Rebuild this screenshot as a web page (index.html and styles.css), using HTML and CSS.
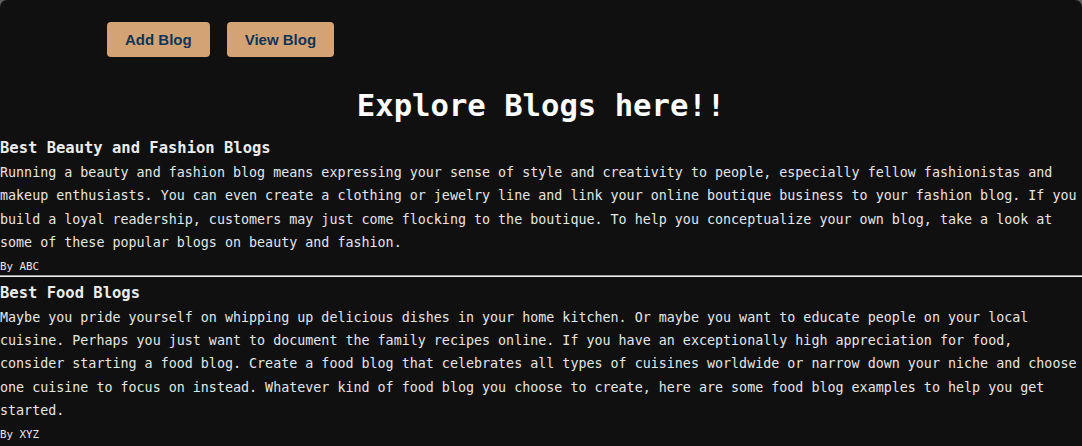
FILE: index.html
```html
<!DOCTYPE html>
<html lang="en">
<head>
<meta charset="utf-8">
<title>Blogs</title>
<link rel="stylesheet" href="styles.css">
</head>
<body>
<div class="page">
  <nav class="nav">
    <button class="btn">Add Blog</button>
    <button class="btn">View Blog</button>
  </nav>
  <h1 class="title">Explore Blogs here!!</h1>
  <article class="post">
    <h3 class="post-title">Best Beauty and Fashion Blogs</h3>
    <p class="post-body">Running a beauty and fashion blog means expressing your sense of style and creativity to people, especially fellow fashionistas and makeup enthusiasts. You can even create a clothing or jewelry line and link your online boutique business to your fashion blog. If you build a loyal readership, customers may just come flocking to the boutique. To help you conceptualize your own blog, take a look at some of these popular blogs on beauty and fashion.</p>
    <div class="post-author">By ABC</div>
  </article>
  <hr class="divider">
  <article class="post">
    <h3 class="post-title">Best Food Blogs</h3>
    <p class="post-body">Maybe you pride yourself on whipping up delicious dishes in your home kitchen. Or maybe you want to educate people on your local cuisine. Perhaps you just want to document the family recipes online. If you have an exceptionally high appreciation for food, consider starting a food blog. Create a food blog that celebrates all types of cuisines worldwide or narrow down your niche and choose one cuisine to focus on instead. Whatever kind of food blog you choose to create, here are some food blog examples to help you get started.</p>
    <div class="post-author">By XYZ</div>
  </article>
</div>
</body>
</html>
```

FILE: styles.css
```css
html, body {
  margin: 0;
  padding: 0;
  background: #5e5e5e;
  height: 100%;
  overflow: hidden;
}
.page {
  background: #101010;
  min-height: 100vh;
  border-radius: 7px 7px 0 0;
  color: #e6e6e6;
  font-family: "DejaVu Sans Mono", "Liberation Mono", monospace;
}
.nav {
  display: flex;
  gap: 17px;
  padding: 22px 0 0 107px;
}
.btn {
  height: 35px;
  padding: 0 18px;
  border: none;
  border-radius: 4px;
  background: #d4a373;
  color: #0b3558;
  font-family: "Liberation Sans", Arial, sans-serif;
  font-weight: bold;
  font-size: 15px;
}
.title {
  margin: 31px 0 13px;
  text-align: center;
  font-size: 30.6px;
  line-height: 36px;
  color: #ffffff;
  font-weight: bold;
}
.post-title {
  margin: 0;
  font-size: 15.5px;
  line-height: 22px;
  font-weight: bold;
  color: #ececec;
}
.post-body {
  margin: 2px 0 0;
  font-size: 13.35px;
  line-height: 23.4px;
  color: #e6e6e6;
}
.post-author {
  margin-top: 4px;
  font-size: 10.8px;
  line-height: 16px;
  color: #e6e6e6;
}
.divider {
  margin: 0 0 5px;
  border: none;
  border-top: 1px solid #9a9a9a;
  border-bottom: 1px solid #f2f2f2;
  height: 0;
}
```
